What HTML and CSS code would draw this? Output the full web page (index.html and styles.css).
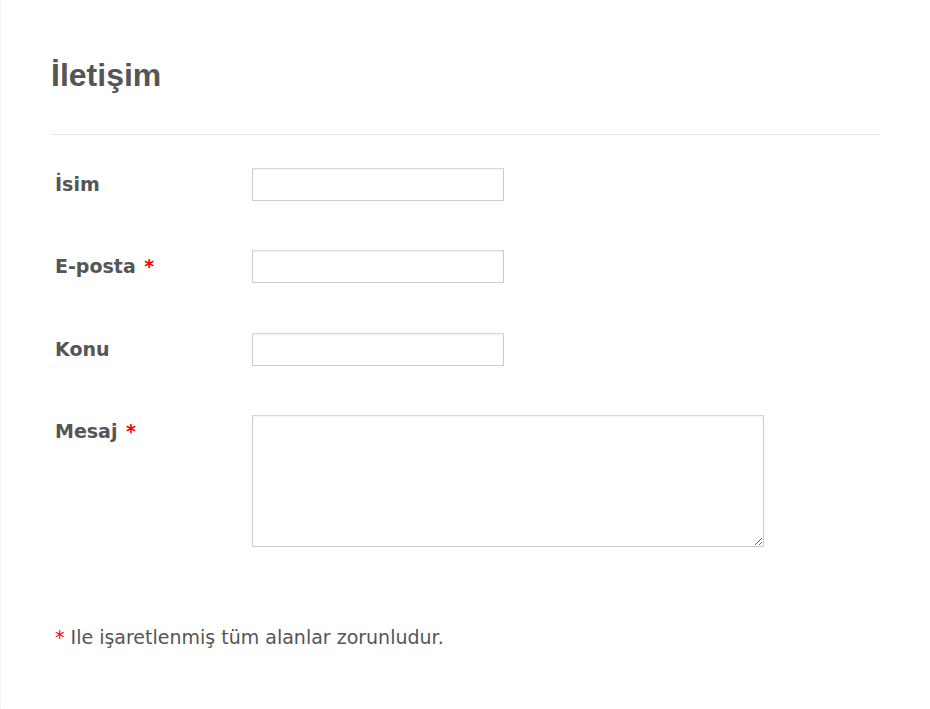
FILE: index.html
```html
<!DOCTYPE html>
<html lang="tr">
<head>
    <meta charset="UTF-8">
    <meta name="viewport" content="width=device-width, initial-scale=1.0">
    <title>İletişim</title>
    <link rel="stylesheet" href="styles.css">
</head>
<body>
    <div class="page">
        <h1 class="title">İletişim</h1>
        <form class="contactForm">
            <div class="row">
                <label class="fieldLabel" for="name">İsim</label>
                <input type="text" id="name" class="textInput">
            </div>
            <div class="row">
                <label class="fieldLabel" for="email">E-posta <span class="required">*</span></label>
                <input type="email" id="email" class="textInput">
            </div>
            <div class="row">
                <label class="fieldLabel" for="subject">Konu</label>
                <input type="text" id="subject" class="textInput">
            </div>
            <div class="row">
                <label class="fieldLabel" for="message">Mesaj <span class="required">*</span></label>
                <textarea id="message" class="messageInput"></textarea>
            </div>
        </form>
        <p class="note"><span class="required">*</span> Ile işaretlenmiş tüm alanlar zorunludur.</p>
    </div>
</body>
</html>
```

FILE: styles.css
```css
body {
    margin: 0;
    padding: 0;
    background-color: #fff;
    font-family: "DejaVu Sans", Verdana, sans-serif;
    color: #555;
}

.page {
    min-height: 709px;
    box-sizing: border-box;
    border-left: 1px dotted #ececec;
    padding: 0 50px 0 50px;
}

.title {
    margin: 0;
    padding: 55px 0 39px 0;
    font-family: "Liberation Sans", Arial, sans-serif;
    font-size: 32px;
    font-weight: bold;
    color: #555;
    line-height: 40px;
    border-bottom: 1px solid #e5e5e5;
}

.contactForm {
    padding-top: 33px;
}

.row {
    display: flex;
    align-items: flex-start;
    margin-bottom: 49.33px;
}

.fieldLabel {
    width: 197px;
    padding-left: 4px;
    padding-top: 5px;
    font-weight: bold;
    font-size: 19px;
    line-height: 22px;
    word-spacing: 2px;
}

.required {
    color: #f00;
}

.textInput,
.messageInput {
    box-sizing: border-box;
    margin: 0;
    border: 1px solid #ccc;
    border-top-color: #d8d8d8;
    box-shadow: inset 0 1px 2px rgba(0, 0, 0, 0.06);
    background: #fff;
    font-family: inherit;
    font-size: 15px;
}

.textInput {
    width: 252px;
    height: 33px;
}

.messageInput {
    width: 512px;
    height: 132px;
    resize: vertical;
}

.note {
    margin: 79px 0 0 0;
    padding-left: 4px;
    font-size: 19px;
    line-height: 22px;
}
```
